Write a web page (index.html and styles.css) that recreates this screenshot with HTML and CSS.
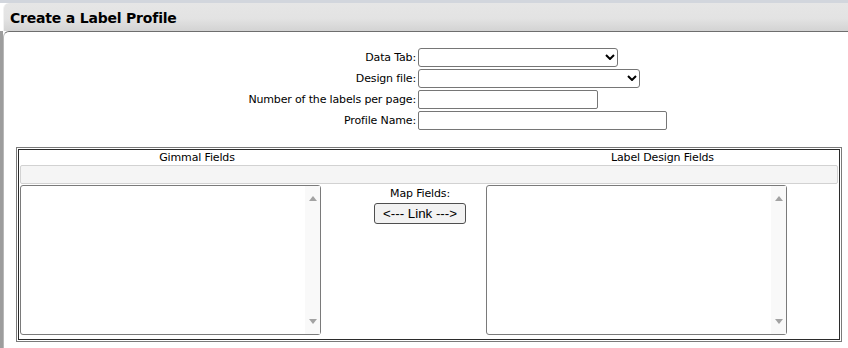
FILE: index.html
```html
<!DOCTYPE html>
<html>
<head>
<meta charset="utf-8">
<title>Create a Label Profile</title>
<link rel="stylesheet" href="styles.css">
</head>
<body>
<div class="page">
  <div class="topband"></div>
  <div class="header"><h1 class="title">Create a Label Profile</h1></div>
  <div class="frame">
    <div class="panel">
      <div class="form">
        <label class="lbl">Data Tab:</label>
        <div class="selwrap">
          <select class="sel w200"></select>
          <svg class="chev" width="10" height="6" viewBox="0 0 10 6"><path d="M1 1 L5 5 L9 1" fill="none" stroke="#000" stroke-width="2"/></svg>
        </div>
        <label class="lbl">Design file:</label>
        <div class="selwrap">
          <select class="sel w222"></select>
          <svg class="chev" width="10" height="6" viewBox="0 0 10 6"><path d="M1 1 L5 5 L9 1" fill="none" stroke="#000" stroke-width="2"/></svg>
        </div>
        <label class="lbl">Number of the labels per page:</label>
        <input class="txt w180" type="text">
        <label class="lbl">Profile Name:</label>
        <input class="txt w249" type="text">
      </div>

      <div class="fields">
        <div class="fields-inner">
          <div class="heads">
            <div class="head">Gimmal Fields</div>
            <div class="head head-right">Label Design Fields</div>
          </div>
          <div class="band"></div>
          <div class="lists">
            <div class="listbox">
              <div class="scroll"><span class="arr up"></span><span class="arr down"></span></div>
            </div>
            <div class="map">
              <div class="map-label">Map Fields:</div>
              <button class="btn" type="button">&lt;--- Link ---&gt;</button>
            </div>
            <div class="listbox">
              <div class="scroll"><span class="arr up"></span><span class="arr down"></span></div>
            </div>
          </div>
        </div>
      </div>
    </div>
  </div>
</div>
</body>
</html>
```
FILE: styles.css
```css
* { box-sizing: border-box; }

body {
  margin: 0;
  background: #fff;
  color: #000;
  font-family: "DejaVu Sans", Verdana, sans-serif;
  font-size: 11px;
  letter-spacing: -0.15px;
}

.page {
  width: 848px;
  height: 348px;
  overflow: hidden;
  display: flex;
  flex-direction: column;
}

.topband {
  height: 3px;
  background: #d2d6dd;
  flex: none;
}

.header {
  flex: none;
  height: 28px;
  margin-left: 3px;
  padding: 7px 0 0 6px;
  border-left: 1px solid #f2f2f2;
  border-top-left-radius: 6px;
  background: linear-gradient(#e6e6e6 0%, #e3e3e3 55%, #d3d3d3 100%);
}

.title {
  margin: 0;
  font-family: "DejaVu Sans", Verdana, sans-serif;
  font-weight: bold;
  font-size: 14px;
  line-height: 16px;
  letter-spacing: -0.2px;
}

.frame {
  flex: 1;
  display: flex;
  border-left: 3px solid #9d9d9d;
}

.panel {
  flex: 1;
  border-top: 1px solid #6e6e6e;
  border-left: 1px solid #b8b8b8;
  border-top-left-radius: 6px;
  background: #fff;
}

.form {
  margin-top: 16px;
  display: grid;
  grid-template-columns: 412px auto;
  column-gap: 2px;
  row-gap: 2px;
  justify-content: start;
  align-items: center;
}

.lbl {
  text-align: right;
  line-height: 19px;
  white-space: nowrap;
}

.selwrap {
  position: relative;
  justify-self: start;
  height: 19px;
}

.sel {
  display: block;
  appearance: none;
  -webkit-appearance: none;
  height: 19px;
  margin: 0;
  padding: 0;
  border: 1px solid #767676;
  border-radius: 3px;
  background: #fff;
}

.chev {
  position: absolute;
  right: 3px;
  top: 6px;
  pointer-events: none;
}

.txt {
  justify-self: start;
  display: block;
  height: 19px;
  margin: 0;
  padding: 0;
  border: 1px solid #767676;
  border-radius: 2px;
  background: #fff;
}

.w200 { width: 200px; }
.w222 { width: 222px; }
.w180 { width: 180px; }
.w249 { width: 249px; }

.fields {
  margin: 17px 6px 0 12px;
  border: 1px solid #7a7a7a;
  padding: 1px;
}

.fields-inner {
  border: 1px solid #2b2b2b;
  padding: 0 1px 4px 1px;
}

.heads {
  display: grid;
  grid-template-columns: 354px 1fr 351px;
  height: 15px;
  line-height: 15px;
}

.head { text-align: center; }
.head-right { grid-column: 3; }

.band {
  height: 19px;
  border: 1px solid #d2d2d2;
  border-radius: 2px;
  background: #f5f5f5;
}

.lists {
  margin-top: 1px;
  display: flex;
  align-items: flex-start;
}

.listbox {
  flex: none;
  width: 301px;
  height: 150px;
  border: 1px solid #7a7a7a;
  border-radius: 3px;
  background: #fff;
  display: flex;
  justify-content: flex-end;
}

.scroll {
  width: 15px;
  height: 100%;
  background: #f9f9f9;
  display: flex;
  flex-direction: column;
  justify-content: space-between;
  align-items: center;
  padding: 10px 0;
}

.arr {
  display: block;
  width: 0;
  height: 0;
  border-left: 4.5px solid transparent;
  border-right: 4.5px solid transparent;
}
.arr.up { border-bottom: 5px solid #a3a3a3; }
.arr.down { border-top: 5px solid #a3a3a3; }

.map {
  flex: none;
  width: 165px;
  padding: 2px 0 0 33px;
  display: flex;
  flex-direction: column;
  align-items: center;
}

.map-label {
  line-height: 13px;
  white-space: nowrap;
}

.btn {
  margin: 3px 0 0 0;
  width: 92px;
  height: 21px;
  padding: 0;
  border: 1px solid #4f4f4f;
  border-radius: 3px;
  background: #f2f2f2;
  font-family: "Liberation Sans", Arial, sans-serif;
  font-size: 13.33px;
  letter-spacing: 0;
  line-height: 19px;
  color: #000;
}
```
